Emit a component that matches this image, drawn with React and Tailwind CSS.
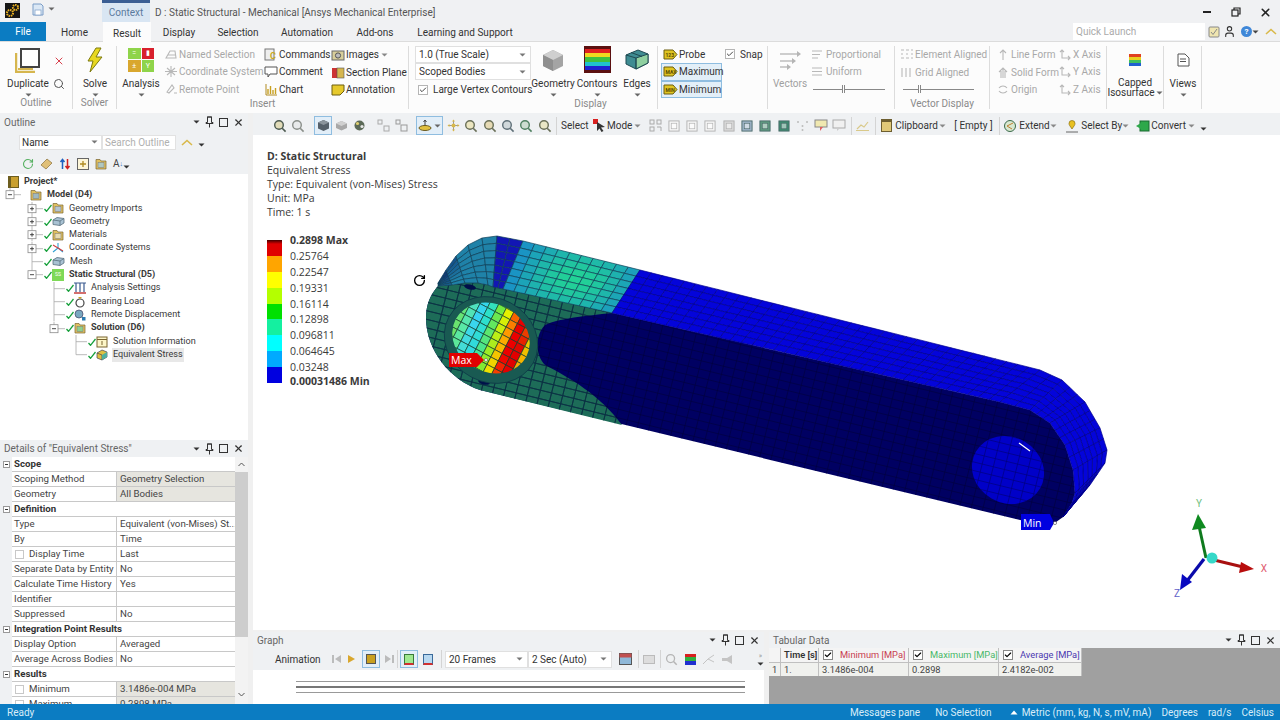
import { RotateCw, User, Check, X, Search } from 'lucide-react'

// ---- mesh for the result model ----
const outer = [[438,283],[446,270],[456,256],[468,245],[482,238],[497,236],[523,241],[640,270],[1040,370],[1062,380],[1085,402],[1100,428],[1107,450],[1105,463],[1090,485],[1063,517]]
const inner = [[438,286],[452,285],[465,283],[478,283],[488,285],[493,287],[503,289],[612,313],[1000,402],[1030,410],[1050,423],[1065,445],[1073,470],[1075,493],[1072,503],[1063,517]]

const hex = c => [1, 3, 5].map(i => parseInt(c.slice(i, i + 2), 16))
const mix = (a, b, t) => {
  const x = hex(a), y = hex(b)
  const k = Math.max(0, Math.min(1, t))
  return `rgb(${x.map((v, i) => Math.round(v + (y[i] - v) * k)).join(',')})`
}

function bandColor(x, v) {
  if (x < 497) return mix('#0b2f78', '#1f82a8', (x - 440) / 16 + v * 0.8)
  if (x < 523) return '#1216b4'
  if (x < 640) {
    const s = (x - 523) / 117
    return mix('#1a94c4', '#22d296', Math.sin(Math.PI * s) * (0.55 + 0.45 * Math.sin(Math.PI * v)))
  }
  return '#0404da'
}

const bandCells = (() => {
  const cols = []
  for (let i = 0; i < outer.length - 1; i++) {
    const len = Math.hypot(outer[i + 1][0] - outer[i][0], outer[i + 1][1] - outer[i][1])
    const n = Math.max(1, Math.round(len / 11.5))
    for (let k = 0; k < n; k++) {
      const t = k / n
      cols.push([
        [outer[i][0] + (outer[i + 1][0] - outer[i][0]) * t, outer[i][1] + (outer[i + 1][1] - outer[i][1]) * t],
        [inner[i][0] + (inner[i + 1][0] - inner[i][0]) * t, inner[i][1] + (inner[i + 1][1] - inner[i][1]) * t],
      ])
    }
  }
  cols.push([outer[outer.length - 1], inner[inner.length - 1]])
  const rows = 7
  const at = (c, r) => [c[0][0] + (c[1][0] - c[0][0]) * r / rows, c[0][1] + (c[1][1] - c[0][1]) * r / rows]
  const cells = []
  for (let i = 0; i < cols.length - 1; i++) {
    for (let r = 0; r < rows; r++) {
      const pts = [at(cols[i], r), at(cols[i + 1], r), at(cols[i + 1], r + 1), at(cols[i], r + 1)]
      cells.push({
        d: 'M' + pts.map(p => p[0].toFixed(1) + ' ' + p[1].toFixed(1)).join('L') + 'Z',
        fill: bandColor(cols[i][0][0], (r + 0.5) / rows),
        dark: cols[i][0][0] >= 640,
      })
    }
  }
  return cells
})()

const gridLines = (() => {
  const lines = []
  for (let k = -40; k < 30; k++) {
    const y0 = 300 + k * 8.6
    lines.push(`M400 ${y0 + 30}L1130 ${y0 + 30 + 730 * 0.245}`)
  }
  for (let k = 0; k < 70; k++) {
    const x0 = 380 + k * 11.8
    lines.push(`M${x0} 560L${x0 + 90} 200`)
  }
  return lines.join('')
})()

const stops = [[-46,'#78e040'],[-30,'#58e8a8'],[-20,'#38d4f4'],[-10,'#2ce0c8'],[0,'#78ea38'],[8,'#e8f000'],[14,'#ffa000'],[20,'#ee0000'],[30,'#e00000'],[36,'#ffa000'],[43,'#d8f000'],[52,'#50e040']]
function holeColor(u) {
  for (let i = 0; i < stops.length - 1; i++) {
    if (u <= stops[i + 1][0]) return mix(stops[i][1], stops[i + 1][1], (u - stops[i][0]) / (stops[i + 1][0] - stops[i][0]))
  }
  return stops[stops.length - 1][1]
}
const holeCells = (() => {
  const out = []
  const step = 8.5
  for (let a = -7; a < 7; a++) {
    for (let b = -7; b < 7; b++) {
      const p = (u, v) => [491 + u * 0.88 - v * 0.45, 338 + u * 0.47 + v * 0.88]
      const u = a * step, v = b * step
      const pts = [p(u, v), p(u + step, v), p(u + step, v + step), p(u, v + step)]
      out.push({
        d: 'M' + pts.map(q => q[0].toFixed(1) + ' ' + q[1].toFixed(1)).join('L') + 'Z',
        fill: holeColor(u + step / 2 - (v + step / 2) * 0.12),
      })
    }
  }
  return out
})()

const faceD = 'M438 286L452 285L465 283L478 283L488 285L494 287L503 289L612 313L1000 402L1030 410L1050 423L1065 445L1073 470L1075 493L1072 503L1063 517L1052 525L1020 520L480 390C450 380 426 350 426 318C426 305 430 295 438 286Z'
const tealD = 'M438 286L452 285L465 283L478 283L488 285L494 287L503 289L612 313C585 316 560 318 545 325C535 335 535 355 545 365C570 378 600 395 622 425L480 390C450 380 426 350 426 318C426 305 430 295 438 286Z'

function Model() {
  return (
    <svg viewBox="253 135 1027 495" className="absolute inset-0 w-full h-full">
      <defs>
        <clipPath id="face"><path d={faceD} /></clipPath>
        <clipPath id="teal"><path d={tealD} /></clipPath>
        <clipPath id="hole1"><ellipse cx="491" cy="338" rx="40" ry="34" transform="rotate(28 491 338)" /></clipPath>
        <clipPath id="hole2"><ellipse cx="1008" cy="470" rx="37" ry="33" transform="rotate(30 1008 470)" /></clipPath>
      </defs>
      <path d={faceD} fill="#000062" />
      <path d={tealD} fill="#1d6c58" />
      <g clipPath="url(#face)"><path d={gridLines} stroke="#00003c" strokeWidth="0.6" fill="none" /></g>
      <g clipPath="url(#teal)"><path d={gridLines} stroke="#0d3644" strokeWidth="0.8" fill="none" /></g>
      <ellipse cx="470" cy="287" rx="6" ry="2.5" fill="#00104a" transform="rotate(14 470 287)" />
      <ellipse cx="484" cy="382" rx="6" ry="2.5" fill="#00104a" transform="rotate(14 484 382)" />
      {bandCells.map((c, i) => (
        <path key={i} d={c.d} fill={c.fill} stroke={c.dark ? '#00008c' : '#0f3f58'} strokeWidth="0.7" />
      ))}
      <ellipse cx="491" cy="340" rx="48" ry="42" transform="rotate(28 491 340)" fill="#195a52" stroke="#0e3a48" strokeWidth="0.8" />
      <g clipPath="url(#hole1)">
        {holeCells.map((c, i) => <path key={i} d={c.d} fill={c.fill} stroke="#1a4030" strokeWidth="0.7" />)}
      </g>
      <ellipse cx="1008" cy="470" rx="37" ry="33" transform="rotate(30 1008 470)" fill="#0000c8" />
      <g clipPath="url(#hole2)"><path d={gridLines} stroke="#00007c" strokeWidth="0.7" fill="none" /></g>
      <path d="M1019 443L1030 451" stroke="#fff" strokeWidth="1.2" />
      {/* labels */}
      <path d="M449 353H477L484 360L477 367H449Z" fill="#e00000" />
      <circle cx="486" cy="360" r="1.5" fill="#fff" stroke="#444" strokeWidth="0.5" />
      <path d="M1021 514H1050L1054 523L1050 530H1021Z" fill="#0000e0" />
      <circle cx="1055" cy="523" r="1.6" fill="#fff" stroke="#444" strokeWidth="0.6" />
      {/* triad */}
      <path d="M1206 558L1199 526" stroke="#0f7a1e" strokeWidth="3" />
      <path d="M1198 514L1206 528L1192 530Z" fill="#0f8a20" />
      <path d="M1214 560L1243 567" stroke="#a81010" strokeWidth="3" />
      <path d="M1254 569L1239 573L1241 562Z" fill="#b80d0d" />
      <path d="M1204 559L1187 581" stroke="#0a0aaa" strokeWidth="3.2" />
      <path d="M1180 590L1182 574L1192 582Z" fill="#0808c0" />
      <circle cx="1212" cy="558" r="5.5" fill="#36d8c8" />
      <text x="1199" y="507" fontSize="10" fill="#70c080" textAnchor="middle">Y</text>
      <text x="1264" y="572" fontSize="10" fill="#e06070" textAnchor="middle">X</text>
      <text x="1177" y="597" fontSize="10" fill="#6060c8" textAnchor="middle">Z</text>
    </svg>
  )
}

// ---- small bits ----
const Caret = ({ c = '#555' }) => (
  <svg width="7" height="4" viewBox="0 0 7 4" className="shrink-0"><path d="M0.5 0.5H6.5L3.5 3.5Z" fill={c} /></svg>
)

function Pin() {
  return (
    <svg width="9" height="12" viewBox="0 0 9 12"><path d="M2.5 1V6.5H1V7.5H8V6.5H6.5V1ZM2 1H7M4.5 7.5V11.5" stroke="#333" strokeWidth="1" fill="none" /></svg>
  )
}

function PanelHeader({ title, tall }) {
  return (
    <div className={`${tall ? 'h-[17px]' : 'h-[16px]'} flex items-center bg-[#eff1f3] pl-[4px] pr-[4px] shrink-0`}>
      <span className="text-[10px] text-[#666] whitespace-nowrap">{title}</span>
      <div className="flex-1 mx-[4px] h-[5px] bg-[radial-gradient(#c9c9c9_0.6px,transparent_0.7px)] bg-[length:2px_2px]" />
      <div className="flex items-center gap-[5px] text-[#333]">
        <Caret c="#333" />
        <Pin />
        <span className="w-[9px] h-[9px] border border-[#333]" />
        <X size={11} strokeWidth={2.5} />
      </div>
    </div>
  )
}

const Mag = ({ c = '#b7a24a', ring = '#5b6b60', s = 14 }) => (
  <svg width={s} height={s} viewBox="0 0 14 14" className="shrink-0">
    <circle cx="6" cy="6" r="4.3" fill={c} fillOpacity="0.35" stroke={ring} strokeWidth="1.4" />
    <path d="M9.2 9.2L12.6 12.6" stroke={ring} strokeWidth="1.6" />
  </svg>
)

const Sq = ({ fill = 'none', line = '#a8a8a8', s = 13 }) => (
  <svg width={s} height={s} viewBox="0 0 13 13" className="shrink-0">
    <rect x="1" y="1" width="11" height="11" fill={fill} stroke={line} />
    <rect x="3.5" y="3.5" width="6" height="6" fill="#fff" fillOpacity="0.5" stroke={line} strokeWidth="0.7" />
  </svg>
)

const Tag = ({ t }) => (
  <svg width="15" height="13" viewBox="0 0 15 13" className="shrink-0">
    <path d="M1 2H10L14 6.5L10 11H1Z" fill="#dfc420" stroke="#6d5e10" />
    <text x="2.5" y="8.6" fontSize="5" fontWeight="700" fill="#5a4a00">{t}</text>
  </svg>
)

const Folder = ({ c = '#e0c060', inner = '#b0c8c0' }) => (
  <svg width="12" height="12" viewBox="0 0 12 12" className="shrink-0">
    <path d="M1 3V1.5H5L6 3H11V11H1Z" fill={c} stroke="#7a6530" strokeWidth="0.7" />
    <rect x="3" y="4.5" width="6" height="5" fill={inner} stroke="#777" strokeWidth="0.5" />
  </svg>
)

const Block = () => (
  <svg width="13" height="11" viewBox="0 0 13 11" className="shrink-0">
    <path d="M1 4L5 1.5L12 2.5V7L8 9.5L1 8.5Z" fill="#a9c2d3" stroke="#58707f" strokeWidth="0.8" />
    <path d="M1 4L8 5V9.5M8 5L12 2.5" stroke="#58707f" strokeWidth="0.8" fill="none" />
  </svg>
)

const GreenCheck = () => (
  <svg width="8" height="8" viewBox="0 0 8 8" className="shrink-0"><path d="M0.5 5L2.5 7.3L7.5 1" stroke="#17a03c" strokeWidth="1.3" fill="none" /></svg>
)

// ---- ribbon ----
function Group({ w, label, children, labelClass = '' }) {
  return (
    <div className="flex flex-col shrink-0 border-r border-[#dcdcdc] my-[4px]" style={{ width: w }}>
      <div className="flex h-[52px]">{children}</div>
      <div className={`text-[10px] text-[#8a8a8a] text-center leading-[13px] -mt-[1px] ${labelClass}`}>{label}</div>
    </div>
  )
}

function BigBtn({ w, icon, label, gray, caret = true }) {
  return (
    <div className="flex flex-col items-center shrink-0" style={{ width: w }}>
      <div className="h-[28px] flex items-center justify-center">{icon}</div>
      <div className={`text-[10px] leading-[13px] mt-[3px] whitespace-pre-line text-center ${gray ? 'text-[#a0a0a0]' : 'text-[#333]'}`}>{label}</div>
      {caret && <div className="mt-[3px]"><Caret c={gray ? '#aaa' : '#666'} /></div>}
    </div>
  )
}

function Item({ icon, label, gray, on }) {
  return (
    <div className={`h-[17.5px] flex items-center gap-[1px] whitespace-nowrap text-[10px] ${gray ? 'text-[#a8a8a8]' : 'text-[#333]'} ${on ? 'bg-[#e3eff8] border border-[#8fbde0] -mx-[2px] px-[1px]' : ''}`}>
      {icon}
      <span>{label}</span>
    </div>
  )
}

const Col = ({ w, children }) => <div className="flex flex-col shrink-0" style={{ width: w }}>{children}</div>

const GrayIco = ({ d }) => (
  <svg width="14" height="13" viewBox="0 0 14 13" className="shrink-0"><path d={d} stroke="#b8b8b8" strokeWidth="1.1" fill="none" /></svg>
)

function Check13({ on = true }) {
  return (
    <span className="w-[10px] h-[10px] border border-[#b5b5b5] bg-white flex items-center justify-center shrink-0">
      {on && <Check size={8} strokeWidth={3} className="text-[#444]" />}
    </span>
  )
}

function Sel({ w, label, h = 'h-[17px]' }) {
  return (
    <div className={`${h} bg-white border border-[#e0e0e0] flex items-center justify-between pl-[3px] pr-[4px] text-[10px] text-[#333] shrink-0 whitespace-nowrap`} style={{ width: w }}>
      <span>{label}</span>
      <Caret c="#777" />
    </div>
  )
}

function Ribbon() {
  return (
    <div className="h-[72px] flex bg-[#fcfcfc] border-t border-[#dcdcdc] shrink-0">
      <Group w={73} label="Outline">
        <div className="w-[56px]">
          <BigBtn w={56} label="Duplicate" icon={
            <svg width="26" height="26" viewBox="0 0 26 26"><path d="M1 6V25H20" stroke="#d6b64e" strokeWidth="2.5" fill="none" /><path d="M3 22H18" stroke="#d6b64e" strokeWidth="2" /><rect x="6" y="2" width="18" height="18" fill="#fff" stroke="#444" strokeWidth="2" /></svg>
          } />
        </div>
        <div className="flex flex-col items-center pt-[9px] gap-[11px] w-[10px] -ml-[2px]">
          <X size={12} strokeWidth={2} className="text-[#d8404c]" />
          <Search size={12} strokeWidth={2} className="text-[#555]" />
        </div>
      </Group>
      <Group w={44} label="Solver">
        <BigBtn w={44} label="Solve" icon={
          <svg width="16" height="26" viewBox="0 0 16 26"><path d="M9 1L1 14H6L3 25L15 10H9L14 1Z" fill="#e8d820" stroke="#7d7a10" strokeWidth="1" /></svg>
        } />
      </Group>
      <Group w={292} label="Insert">
        <div className="w-[47px] pl-[1px]">
          <BigBtn w={46} label="Analysis" icon={
            <div className="grid grid-cols-2 gap-[1px] w-[26px] h-[24px]">
              <div className="bg-[#8fd44a] flex items-center justify-center text-white text-[7px]">=</div>
              <div className="bg-[#d8202c] flex items-center justify-center text-white text-[7px]">▮</div>
              <div className="bg-[#d9a72e] flex items-center justify-center text-white text-[8px]">±</div>
              <div className="bg-[#8fd44a] flex items-center justify-center text-white text-[7px]">Y</div>
            </div>
          } />
        </div>
        <Col w={100}>
          <Item gray label="Named Selection" icon={<GrayIco d="M2 10L6 3H11L12 10ZM4 7H12" />} />
          <Item gray label="Coordinate System" icon={<GrayIco d="M7 1V12M1 6.5H13M3 3L11 10M11 3L3 10" />} />
          <Item gray label="Remote Point" icon={<GrayIco d="M3 9L8 2L10 5L5 10ZM10 10H13" />} />
        </Col>
        <Col w={67}>
          <Item label="Commands" icon={<svg width="14" height="13" viewBox="0 0 14 13" className="shrink-0"><rect x="1" y="1" width="9" height="11" fill="#eee" stroke="#777" /><text x="6" y="11" fontSize="9" fill="#c8a820" fontWeight="700">C</text></svg>} />
          <Item label="Comment" icon={<svg width="14" height="13" viewBox="0 0 14 13" className="shrink-0"><path d="M1 2H13V9H6L4 12V9H1Z" fill="#fff" stroke="#555" /></svg>} />
          <Item label="Chart" icon={<svg width="14" height="13" viewBox="0 0 14 13" className="shrink-0"><path d="M2 1V12H13" stroke="#b08a20" fill="none" /><path d="M4 11V6M6.5 11V3M9 11V7M11.5 11V5" stroke="#c8a020" strokeWidth="1.4" /></svg>} />
        </Col>
        <Col w={78}>
          <div className="flex items-center gap-[2px]">
            <Item label="Images" icon={<svg width="14" height="12" viewBox="0 0 14 12" className="shrink-0"><rect x="1" y="2" width="12" height="9" fill="#d8ce9a" stroke="#666" /><circle cx="7" cy="6.5" r="2.6" fill="#bbb" stroke="#555" /></svg>} />
            <Caret c="#888" />
          </div>
          <Item label="Section Plane" icon={<svg width="14" height="13" viewBox="0 0 14 13" className="shrink-0"><rect x="1" y="2" width="7" height="10" fill="#c33" /><rect x="6" y="2" width="7" height="10" fill="#d6b64e" stroke="#555" strokeWidth="0.6" /></svg>} />
          <Item label="Annotation" icon={<svg width="14" height="13" viewBox="0 0 14 13" className="shrink-0"><path d="M1 2H13V8L9 12H1Z" fill="#e6c92c" stroke="#6d5e10" /></svg>} />
        </Col>
      </Group>
      <Group w={249} label="Display" labelClass="pl-[115px]">
        <div className="w-[122px] pl-[6px] flex flex-col shrink-0">
          <Sel w={116} label="1.0 (True Scale)" />
          <Sel w={116} label="Scoped Bodies" />
          <div className="flex items-center gap-[5px] pl-[3px] mt-[1px] h-[17px] text-[10px] text-[#333] whitespace-nowrap"><Check13 /><span>Large Vertex Contours</span></div>
        </div>
        <BigBtn w={44} label="Geometry" icon={
          <svg width="22" height="24" viewBox="0 0 22 24"><path d="M11 2L21 7V18L11 23L1 18V7Z" fill="#a4a4a4" /><path d="M11 2L21 7L11 12L1 7Z" fill="#cfcfcf" /><path d="M11 12V23L1 18V7Z" fill="#8f8f8f" /></svg>
        } />
        <BigBtn w={44} label="Contours" icon={
          <div className="w-[27px] h-[27px] flex flex-col border-y-[3px] border-x border-[#5b1010] -mt-[1px]">
            <div className="flex-1 bg-[#e02020]" /><div className="flex-1 bg-[#f0d820]" /><div className="flex-1 bg-[#40c040]" /><div className="flex-1 bg-[#20c0d0]" /><div className="flex-1 bg-[#2020d0]" />
          </div>
        } />
        <BigBtn w={36} label="Edges" icon={
          <svg width="24" height="22" viewBox="0 0 24 22"><path d="M1 6L13 1L23 5V14L11 20L1 15Z" fill="#3f8c92" stroke="#1f4a52" /><path d="M11 9L23 5V14L11 20Z" fill="#8fd0a0" stroke="#1f4a52" /><path d="M1 6L11 9V20" stroke="#1f4a52" fill="none" /><path d="M6 3.5L17 7.5" stroke="#1f4a52" /></svg>
        } />
      </Group>
      <Group w={110} label="">
        <div className="w-[62px] pl-[5px] flex flex-col shrink-0">
          <Item label="Probe" icon={<Tag t="123" />} />
          <Item label="Maximum" on icon={<Tag t="MAX" />} />
          <Item label="Minimum" on icon={<Tag t="MIN" />} />
        </div>
        <div className="flex items-start gap-[5px] pt-[3px] pl-[5px] text-[10px] text-[#333]"><Check13 /><span className="leading-[11px]">Snap</span></div>
      </Group>
      <Group w={127} label="">
        <div className="w-[43px] shrink-0 pl-[1px]">
          <BigBtn w={42} gray caret={false} label="Vectors" icon={
            <svg width="24" height="24" viewBox="0 0 24 24"><path d="M2 6H20M2 13H15M2 19H10" stroke="#bdbdbd" strokeWidth="1.5" /><path d="M23 6L19 3V9ZM18 13L14 10V16ZM13 19L9 16V22Z" fill="#b5b5b5" /></svg>
          } />
        </div>
        <Col w={82}>
          <Item gray label="Proportional" icon={<GrayIco d="M1 3H11M1 6.5H9M1 10H7" />} />
          <Item gray label="Uniform" icon={<GrayIco d="M1 3H11M1 6.5H11M1 10H11" />} />
          <div className="h-[17.5px] flex items-center pl-[2px] pr-[8px]">
            <div className="flex-1 h-[1px] bg-[#888] relative"><span className="absolute left-[29px] -top-[4px] w-[3px] h-[8px] border-x border-[#888] bg-white" /></div>
          </div>
        </Col>
      </Group>
      <Group w={95} label="Vector Display">
        <div className="pl-[5px]">
          <Item gray label="Element Aligned" icon={<GrayIco d="M1 2H4M6 2H9M11 2H13M1 6H3M6 6H8M11 6H13M1 10H4M6 10H9M11 10H13" />} />
          <Item gray label="Grid Aligned" icon={<GrayIco d="M2 2V11M6 2V11M10 2V11" />} />
          <div className="h-[17.5px] flex items-center pl-[3px] pr-[6px] w-[80px]">
            <div className="flex-1 h-[1px] bg-[#888] relative"><span className="absolute left-[15px] -top-[4px] w-[3px] h-[8px] border-x border-[#888] bg-white" /></div>
          </div>
        </div>
      </Group>
      <Group w={117} label="">
        <Col w={68}>
          <div className="pl-[6px]">
            <Item gray label="Line Form" icon={<GrayIco d="M7 12V2M4 5L7 2L10 5" />} />
            <Item gray label="Solid Form" icon={<GrayIco d="M7 12V3M5 12V5M9 12V5M3 6L7 2L11 6" />} />
            <Item gray label="Origin" icon={<GrayIco d="M3 5A5 5 0 0 1 11 5M3 8A5 5 0 0 0 11 8" />} />
          </div>
        </Col>
        <Col w={48}>
          <Item gray label="X Axis" icon={<GrayIco d="M4 2V10H12M2 4L4 2L6 4M10 8L12 10L10 12" />} />
          <Item gray label="Y Axis" icon={<GrayIco d="M4 2V10H12M2 4L4 2L6 4M10 8L12 10L10 12" />} />
          <Item gray label="Z Axis" icon={<GrayIco d="M4 2V10H12M2 4L4 2L6 4M10 8L12 10L10 12" />} />
        </Col>
      </Group>
      <Group w={57} label="">
        <div className="w-[57px] flex flex-col items-center">
          <div className="h-[24px] flex items-center pt-[4px]">
            <div className="w-[12px] h-[12px] flex flex-col">
              <div className="flex-1 bg-[#e04020]" /><div className="flex-1 bg-[#e8d020]" /><div className="flex-1 bg-[#40c060]" /><div className="flex-1 bg-[#2060d0]" />
            </div>
          </div>
          <div className="text-[10px] leading-[10px] text-[#333] text-center mt-[8px]">Capped</div>
          <div className="flex items-center gap-[1px] text-[10px] leading-[10px] text-[#333] whitespace-nowrap">Isosurface<Caret c="#666" /></div>
        </div>
      </Group>
      <Group w={38} label="">
        <BigBtn w={38} label="Views" icon={
          <svg width="13" height="14" viewBox="0 0 13 14"><path d="M1 1H8L12 5V13H1Z" fill="#fff" stroke="#555" /><path d="M3 6H9M3 8.5H9" stroke="#555" /></svg>
        } />
      </Group>
    </div>
  )
}

// ---- outline tree ----
function TreeCol({ kind }) {
  const stroke = '#a8a8a8'
  const h = 13.33
  const box = kind === 'plus' || kind === 'minus' || kind === 'minusEnd' || kind === 'minusTop'
  return (
    <svg width="22" height={h} viewBox="0 0 22 13.33" className="shrink-0">
      {(kind === 't' || kind === 'v' || kind === 'plus' || kind === 'minus') && <path d="M11 0V13.33" stroke={stroke} strokeWidth="0.8" />}
      {(kind === 'l' || kind === 'minusEnd' || kind === 'minusTop') && <path d="M11 0V6.7" stroke={stroke} strokeWidth="0.8" />}
      {(kind === 't' || kind === 'l' || box) && <path d="M11 6.7H22" stroke={stroke} strokeWidth="0.8" />}
      {box && <rect x="7" y="2.7" width="8" height="8" fill="#fff" stroke="#8a8a8a" strokeWidth="0.8" />}
      {box && <path d="M9 6.7H13" stroke="#333" strokeWidth="0.9" />}
      {kind === 'plus' && <path d="M11 4.7V8.7" stroke="#333" strokeWidth="0.9" />}
    </svg>
  )
}

const tree = [
  { cols: ['minusTop'], icon: <Folder inner="#9fb8c0" />, label: 'Model (D4)', bold: true, noCheck: true },
  { cols: ['', 'plus'], icon: <Folder inner="#b4c4d0" />, label: 'Geometry Imports' },
  { cols: ['', 'plus'], icon: <Block />, label: 'Geometry' },
  { cols: ['', 'plus'], icon: <Folder inner="#e8dcb0" />, label: 'Materials' },
  { cols: ['', 'plus'], icon: <svg width="12" height="12" viewBox="0 0 12 12" className="shrink-0"><path d="M6 1V6L11 10M6 6L1 10" stroke="#30a0d0" strokeWidth="1.1" fill="none" /><path d="M1 3L11 9" stroke="#d04040" strokeWidth="1.1" /></svg>, label: 'Coordinate Systems' },
  { cols: ['', 't'], icon: <Block />, label: 'Mesh' },
  { cols: ['', 'minusEnd'], icon: <span className="w-[12px] h-[12px] bg-[#7ed957] text-white text-[5px] flex items-center justify-center shrink-0">SS</span>, label: 'Static Structural (D5)', bold: true },
  { cols: ['', '', 't'], icon: <svg width="12" height="12" viewBox="0 0 12 12" className="shrink-0"><path d="M2 1V10M6 1V10M10 1V10" stroke="#3a5a90" strokeWidth="1.2" /><path d="M0 1H12" stroke="#3a5a90" /><path d="M0 11H12" stroke="#c03030" strokeWidth="1.4" /></svg>, label: 'Analysis Settings' },
  { cols: ['', '', 't'], icon: <svg width="12" height="12" viewBox="0 0 12 12" className="shrink-0"><circle cx="6" cy="7" r="4" fill="#fff" stroke="#444" strokeWidth="1.2" /><path d="M4 1H8L6 3Z" fill="#c8a020" /></svg>, label: 'Bearing Load' },
  { cols: ['', '', 't'], icon: <svg width="12" height="12" viewBox="0 0 12 12" className="shrink-0"><circle cx="5" cy="5" r="4" fill="#7aa8c0" stroke="#446" strokeWidth="0.7" /><rect x="8" y="8" width="3.5" height="3.5" fill="#2a7ab0" /></svg>, label: 'Remote Displacement' },
  { cols: ['', '', 'minusEnd'], icon: <Folder inner="#8fd08f" />, label: 'Solution (D6)', bold: true },
  { cols: ['', '', '', 't'], icon: <svg width="12" height="12" viewBox="0 0 12 12" className="shrink-0"><rect x="1" y="1" width="10" height="10" fill="#fdf6c8" stroke="#7a6530" /><path d="M1 3.5H11M6 5V9" stroke="#7a6530" /></svg>, label: 'Solution Information' },
  { cols: ['', '', '', 'l'], icon: <svg width="12" height="12" viewBox="0 0 12 12" className="shrink-0"><path d="M1 4L6 1L11 3V8L6 11L1 9Z" fill="#e0c040" stroke="#445" strokeWidth="0.7" /><path d="M1 4L6 6V11" stroke="#445" strokeWidth="0.7" fill="none" /><path d="M6 6L11 3V8L6 11Z" fill="#50b0a0" /></svg>, label: 'Equivalent Stress', sel: true },
]

function Outline() {
  return (
    <div className="h-[327px] flex flex-col shrink-0 bg-white">
      <div className="h-[1px] bg-[#f0f1f3] shrink-0" />
      <PanelHeader title="Outline" />
      <div className="h-[24px] flex items-center bg-[#eff1f3] pl-[19px] shrink-0">
        <div className="w-[83px] h-[15px] bg-white border border-[#e2e2e2] flex items-center justify-between pl-[2px] pr-[3px] text-[10px] text-[#333]">Name<Caret c="#777" /></div>
        <div className="w-[74px] h-[15px] bg-white border border-[#e2e2e2] flex items-center pl-[2px] text-[10px] text-[#b0b0b0] whitespace-nowrap overflow-hidden">Search Outline</div>
        <svg width="12" height="7" viewBox="0 0 12 7" className="ml-[5px]"><path d="M1 6L6 1.5L11 6" stroke="#d9b94a" strokeWidth="1.6" fill="none" /></svg>
        <span className="ml-[5px] mt-[5px]"><Caret c="#333" /></span>
      </div>
      <div className="h-[20px] flex items-center gap-[6px] bg-[#eff1f3] pl-[22px] shrink-0">
        <RotateCw size={12} strokeWidth={2.2} className="text-[#55b060]" />
        <svg width="13" height="12" viewBox="0 0 13 12"><path d="M1 7L7 1L12 5L6 11Z" fill="#e0c078" stroke="#8a7038" strokeWidth="0.7" /></svg>
        <svg width="12" height="12" viewBox="0 0 12 12"><path d="M3.5 11V2M1.5 4L3.5 1.5L5.5 4" stroke="#2060c0" strokeWidth="1.5" fill="none" /><path d="M8.5 1V10M6.5 8L8.5 10.5L10.5 8" stroke="#d02020" strokeWidth="1.5" fill="none" /></svg>
        <svg width="12" height="12" viewBox="0 0 12 12"><rect x="0.5" y="0.5" width="11" height="11" fill="#fdf6d8" stroke="#666" /><path d="M3 6H9M6 3V9" stroke="#b08a20" strokeWidth="1.3" /></svg>
        <Folder />
        <span className="text-[10px] text-[#444] leading-none flex items-center">A<span className="text-[7px] text-[#2a6ac0]">↓</span></span>
        <span className="-ml-[6px] mt-[6px]"><Caret c="#333" /></span>
      </div>
      <div className="pt-[1px] text-[9.1px] text-[#3a3a3a]">
        <div className="h-[13.33px] flex items-center whitespace-nowrap pl-[8px] font-bold">
          <span className="w-[11px] h-[12px] bg-[#c9a030] border border-[#6d5e20] border-l-[3px] mr-[5px] shrink-0" />
          Project*
        </div>
        {tree.map(r => (
          <div key={r.label} className="h-[13.33px] flex items-center whitespace-nowrap -ml-[1px]">
            {r.cols.map((k, i) => <TreeCol key={i} kind={k} />)}
            <span className="w-[9px] flex justify-end shrink-0">{!r.noCheck && <GreenCheck />}</span>
            {r.icon}
            <span className={`ml-[4px] px-[1px] ${r.bold ? 'font-bold' : ''} ${r.sel ? 'bg-[#e8e8e8]' : ''}`}>{r.label}</span>
          </div>
        ))}
      </div>
    </div>
  )
}

// ---- details ----
const details = [
  { section: 'Scope' },
  { k: 'Scoping Method', v: 'Geometry Selection', shade: true },
  { k: 'Geometry', v: 'All Bodies', shade: true },
  { section: 'Definition' },
  { k: 'Type', v: 'Equivalent (von-Mises) St...' },
  { k: 'By', v: 'Time' },
  { k: 'Display Time', v: 'Last', check: true },
  { k: 'Separate Data by Entity', v: 'No' },
  { k: 'Calculate Time History', v: 'Yes' },
  { k: 'Identifier', v: '' },
  { k: 'Suppressed', v: 'No' },
  { section: 'Integration Point Results' },
  { k: 'Display Option', v: 'Averaged' },
  { k: 'Average Across Bodies', v: 'No' },
  { section: 'Results' },
  { k: 'Minimum', v: '3.1486e-004 MPa', shade: true, check: true },
  { k: 'Maximum', v: '0.2898 MPa', shade: true, check: true },
]

function Details() {
  return (
    <div className="flex-1 flex flex-col min-h-0 bg-white">
      <PanelHeader title={'Details of "Equivalent Stress"'} tall />
      <div className="flex-1 flex min-h-0 overflow-hidden">
        <div className="w-[235px] shrink-0 bg-[#eff1f3]">
          {details.map(r => r.section ? (
            <div key={r.section} className="h-[15px] flex">
              <div className="w-[12px] shrink-0 flex items-center justify-center">
                <span className="w-[7px] h-[7px] border border-[#999] bg-white flex items-center justify-center"><span className="w-[3px] h-[1px] bg-[#333]" /></span>
              </div>
              <div className="flex-1 bg-white border-b border-[#c8c8c8] pl-[2px] text-[9.7px] font-bold text-[#333] leading-[14px] whitespace-nowrap">{r.section}</div>
            </div>
          ) : (
            <div key={r.k} className="h-[15px] flex">
              <div className="w-[12px] shrink-0" />
              <div className="w-[105px] shrink-0 bg-white border-b border-r border-[#c8c8c8] pl-[2px] text-[9.7px] text-[#444] flex items-center whitespace-nowrap">
                {r.check && <span className="w-[9px] h-[9px] border border-[#c8c8c8] mr-[5px] ml-[1px] shrink-0" />}
                {r.k}
              </div>
              <div className={`flex-1 border-b border-[#c8c8c8] pl-[3px] text-[9.7px] text-[#444] flex items-center whitespace-nowrap ${r.shade ? 'bg-[#e6e5df]' : 'bg-white'}`}>{r.v}</div>
            </div>
          ))}
        </div>
        <div className="w-[13px] shrink-0 bg-[#f3f3f3] flex flex-col items-center">
          <div className="h-[15px] text-[#666] flex items-center justify-center">
            <svg width="7" height="5" viewBox="0 0 7 5"><path d="M0.5 4L3.5 1L6.5 4" stroke="#555" fill="none" /></svg>
          </div>
          <div className="w-full h-[165px] bg-[#cdcdcd]" />
          <div className="mt-[50px] h-[15px] flex items-center">
            <svg width="7" height="5" viewBox="0 0 7 5"><path d="M0.5 1L3.5 4L6.5 1" stroke="#555" fill="none" /></svg>
          </div>
        </div>
      </div>
    </div>
  )
}

// ---- top toolbar of the viewport ----
const Slot = ({ w, on, children, ml = 0 }) => (
  <div className={`h-[19px] flex items-center justify-center shrink-0 ${on ? 'bg-[#e2eef8] border border-[#8fbde0]' : ''}`} style={{ width: w, marginLeft: ml }}>{children}</div>
)
const Txt = ({ ml = 0, w, children }) => <span className="text-[10px] text-[#333] whitespace-nowrap shrink-0" style={{ marginLeft: ml, width: w }}>{children}</span>
const Sep = ({ ml = 0, mr = 0 }) => <span className="w-[1px] h-[18px] bg-[#d4d4d4] shrink-0" style={{ marginLeft: ml, marginRight: mr }} />

function ViewToolbar() {
  return (
    <div className="h-[22px] flex items-center bg-[#eff1f3] shrink-0 pt-[3px]">
      <Slot w={18}><span className="w-[3px] h-[14px] bg-[radial-gradient(#c4c4c4_0.6px,transparent_0.7px)] bg-[length:2px_2px]" /></Slot>
      <Slot w={18}><Mag ring="#4c5a50" c="#c9b34a" /></Slot>
      <Slot w={18}><Mag ring="#8a8f8a" c="#dddddd" /></Slot>
      <Slot w={18} ml={7} on><svg width="13" height="13" viewBox="0 0 13 13"><path d="M6.5 1L12 3.5V9.5L6.5 12L1 9.5V3.5Z" fill="#55606a" /><path d="M6.5 1L12 3.5L6.5 6L1 3.5Z" fill="#8a949c" /></svg></Slot>
      <Slot w={18}><svg width="13" height="13" viewBox="0 0 13 13"><path d="M6.5 2L12 4.5V9L6.5 11.5L1 9V4.5Z" fill="#a8a8a8" /><path d="M6.5 2L12 4.5L6.5 7L1 4.5Z" fill="#d0d0d0" /></svg></Slot>
      <Slot w={18}><svg width="13" height="13" viewBox="0 0 13 13"><circle cx="6.5" cy="6.5" r="5" fill="#5c6a58" /><circle cx="4.5" cy="4.5" r="1.6" fill="#e0d070" /><circle cx="9" cy="7.5" r="1.6" fill="#e8e8e8" /></svg></Slot>
      <Slot w={18} ml={6}><svg width="13" height="13" viewBox="0 0 13 13" fill="none" stroke="#aaa"><rect x="1" y="1" width="4" height="4" /><rect x="7" y="7" width="5" height="5" /></svg></Slot>
      <Slot w={18}><svg width="13" height="13" viewBox="0 0 13 13" fill="none" stroke="#999"><rect x="1" y="1" width="4" height="4" /><rect x="6" y="6" width="6" height="6" /></svg></Slot>
      <div className="ml-[6px] w-[27px] h-[19px] bg-[#e2eef8] border border-[#8fbde0] flex items-center justify-center gap-[2px] shrink-0">
        <svg width="14" height="14" viewBox="0 0 14 14"><path d="M7 1V10" stroke="#444" /><ellipse cx="7" cy="9" rx="6" ry="2.5" fill="#e0c040" stroke="#6a5a20" /><path d="M5.5 3L7 1L8.5 3" stroke="#444" fill="none" /></svg>
        <Caret c="#666" />
      </div>
      <Slot w={18} ml={1}><svg width="13" height="13" viewBox="0 0 13 13"><path d="M6.5 1V12M1 6.5H12" stroke="#999" /><circle cx="6.5" cy="6.5" r="2" fill="#d9b94a" /><path d="M6.5 0.5L5 2.5H8ZM6.5 12.5L5 10.5H8ZM0.5 6.5L2.5 5V8ZM12.5 6.5L10.5 5V8Z" fill="#d9b94a" /></svg></Slot>
      {[0, 1, 2, 3, 4].map(i => (
        <Slot key={i} w={18.4}><Mag ring={i === 2 ? '#5f7078' : i === 3 ? '#4f8060' : '#6a7058'} c={i === 0 ? '#e8d060' : i === 1 ? '#d8b040' : i === 2 ? '#99aab0' : i === 3 ? '#90b890' : '#e0d070'} /></Slot>
      ))}
      <Sep ml={2} mr={4} />
      <Txt w={27}>Select</Txt>
      <span className="ml-[5px] shrink-0"><svg width="14" height="13" viewBox="0 0 14 13"><rect x="0" y="0" width="5" height="5" fill="#d82020" /><path d="M4 3L12 8L8 8.5L10.5 12L8.5 13L6.5 9.5L4 12Z" fill="#333" /></svg></span>
      <Txt ml={0} w={27}>Mode</Txt>
      <span className="mr-[5px]"><Caret c="#888" /></span>
      <Slot w={18.4}><svg width="13" height="13" viewBox="0 0 13 13" fill="none" stroke="#aaa"><rect x="1" y="1" width="4" height="4" /><rect x="8" y="1" width="4" height="4" /><rect x="1" y="8" width="4" height="4" /><path d="M8 8H12V12" /></svg></Slot>
      {['#f6f6f6', '#f6f6f6', '#f6f6f6', '#d8d8d8', '#9fb4c8', '#5f9a80', '#3f8a70'].map((c, i) => (
        <Slot key={i} w={18.4}><Sq fill={c} line={i > 3 ? '#4a6a6a' : '#b0b0b0'} s={12} /></Slot>
      ))}
      <Slot w={18.4}><svg width="13" height="13" viewBox="0 0 13 13"><circle cx="2" cy="3" r="1" fill="#bbb" /><circle cx="11" cy="3" r="1" fill="#bbb" /><circle cx="6.5" cy="7" r="1" fill="#bbb" /><circle cx="6.5" cy="11" r="1" fill="#bbb" /></svg></Slot>
      <Slot w={18.4}><svg width="14" height="13" viewBox="0 0 14 13"><rect x="1" y="1" width="12" height="7" fill="#f0e8b0" stroke="#888" /><path d="M6 8V12L9 8" fill="#e06060" /></svg></Slot>
      <Slot w={18.4}><svg width="14" height="13" viewBox="0 0 14 13"><rect x="1" y="1" width="12" height="8" fill="#f0f0f0" stroke="#aaa" /><path d="M5 9V12L8 9" fill="#ccc" /></svg></Slot>
      <Sep ml={3} mr={3} />
      <svg width="13" height="11" viewBox="0 0 13 11" className="shrink-0 ml-[1px]"><path d="M1 9L5 5L8 7L12 2M0 10.5H13" stroke="#d9c98a" strokeWidth="1.2" fill="none" /></svg>
      <Sep ml={6} mr={0} />
      <span className="ml-[5px] w-[11px] h-[13px] bg-[#e0c878] border border-[#6d5e30] border-t-[3px] shrink-0" />
      <Txt ml={3} w={43}>Clipboard</Txt>
      <span className="ml-[1px]"><Caret c="#888" /></span>
      <Txt ml={8} w={40}>[ Empty ]</Txt>
      <Sep ml={5} mr={0} />
      <svg width="14" height="14" viewBox="0 0 14 14" className="shrink-0 ml-[3px]"><circle cx="7" cy="7" r="5.5" fill="#d8e8d0" stroke="#3a6a4a" /><path d="M4 7L10 4M4 7L9 10" stroke="#c08030" /></svg>
      <Txt ml={2} w={30}>Extend</Txt>
      <span className="ml-[1px]"><Caret c="#888" /></span>
      <span className="ml-[8px] shrink-0 flex flex-col items-center">
        <svg width="14" height="14" viewBox="0 0 14 14"><path d="M7 10C5 7 4 6 4 4.5A3 3 0 0 1 10 4.5C10 6 9 7 7 10Z" fill="#e8c020" stroke="#8a7010" strokeWidth="0.7" /><path d="M1 13H13" stroke="#666" /></svg>
      </span>
      <Txt ml={2} w={40}>Select By</Txt>
      <span className="ml-[1px]"><Caret c="#888" /></span>
      <svg width="14" height="12" viewBox="0 0 14 12" className="shrink-0 ml-[7px]"><rect x="4" y="1" width="9" height="10" fill="#2ea84a" stroke="#1a6a30" /><path d="M0 6L5 3V9Z" fill="#2ea84a" /></svg>
      <Txt ml={1} w={36}>Convert</Txt>
      <span className="ml-[1px]"><Caret c="#888" /></span>
      <span className="ml-[5px] mt-[6px]"><Caret c="#333" /></span>
    </div>
  )
}

// ---- viewport annotation ----
const legend = [
  ['bg-[linear-gradient(#400000_0%,#e00000_25%)]', '0.2898 Max', true],
  ['bg-[#ffa500]', '0.25764'],
  ['bg-[#ffff00]', '0.22547'],
  ['bg-[#b4ff00]', '0.19331'],
  ['bg-[#00e000]', '0.16114'],
  ['bg-[#14f0a0]', '0.12898'],
  ['bg-[#00ffff]', '0.096811'],
  ['bg-[#00aaff]', '0.064645'],
  ['bg-[#0000e0]', '0.03248'],
]

function Annotation() {
  return (
    <div className="relative pl-[14px] pt-[14px] text-[10.5px] text-[#3a3a3a] w-fit font-['Open_Sans',sans-serif]">
      <div className="font-bold leading-[14px]">D: Static Structural</div>
      <div className="leading-[14px]">Equivalent Stress</div>
      <div className="leading-[14px] whitespace-nowrap">Type: Equivalent (von-Mises) Stress</div>
      <div className="leading-[14px]">Unit: MPa</div>
      <div className="leading-[14px]">Time: 1 s</div>
      <div className="mt-[21px]">
        {legend.map(([c, label, bold]) => (
          <div key={label} className="h-[15.9px] flex">
            <div className={`w-[15px] shrink-0 ${c}`} />
            <span className={`ml-[8px] leading-[14px] -mt-[7px] ${bold ? 'font-bold' : ''}`}>{label}</span>
          </div>
        ))}
        <div className="h-[14px] flex">
          <div className="w-[15px] shrink-0" />
          <span className="ml-[8px] font-bold leading-[14px] -mt-[9px] whitespace-nowrap">0.00031486 Min</span>
        </div>
      </div>
    </div>
  )
}

// ---- bottom panes ----
function GraphPane() {
  return (
    <div className="flex-1 flex flex-col bg-white min-w-0">
      <PanelHeader title="Graph" />
      <div className="h-[22px] flex items-center bg-[#eff1f3] shrink-0 pl-[9px]">
        <span className="w-[3px] h-[14px] bg-[radial-gradient(#c4c4c4_0.6px,transparent_0.7px)] bg-[length:2px_2px]" />
        <Txt ml={10} w={47}>Animation</Txt>
        <svg width="10" height="10" viewBox="0 0 10 10" className="ml-[10px] shrink-0"><path d="M1 1V9" stroke="#aaa" strokeWidth="1.5" /><path d="M9 1V9L3 5Z" fill="#bbb" /></svg>
        <svg width="9" height="10" viewBox="0 0 9 10" className="ml-[5px] shrink-0"><path d="M1 1V9L8 5Z" fill="#d9a72e" /></svg>
        <div className="ml-[6px] w-[18px] h-[18px] bg-[#e2eef8] border border-[#8fbde0] flex items-center justify-center shrink-0"><span className="w-[10px] h-[10px] bg-[#c9a020] border border-[#555]" /></div>
        <svg width="10" height="10" viewBox="0 0 10 10" className="ml-[4px] shrink-0"><path d="M1 1V9L7 5Z" fill="#bbb" /><path d="M9 1V9" stroke="#aaa" strokeWidth="1.5" /></svg>
        <Sep ml={3} mr={2} />
        <div className="w-[18px] h-[18px] bg-[#e2eef8] border border-[#8fbde0] flex items-center justify-center shrink-0"><span className="w-[10px] h-[11px] bg-[#a0e890] border border-[#3a7a3a] border-b-[#d03030] border-b-2" /></div>
        <div className="w-[19px] flex items-center justify-center shrink-0"><span className="w-[10px] h-[11px] bg-[#b8d8f0] border border-[#3a6a9a] border-b-[#d03030] border-b-2" /></div>
        <Sep ml={4} mr={3} />
        <Sel w={83} label="20 Frames" />
        <Sel w={84} label="2 Sec (Auto)" />
        <Slot w={20} ml={3}><svg width="13" height="12" viewBox="0 0 13 12"><rect x="0.5" y="0.5" width="12" height="11" fill="#8fb8d8" stroke="#555" /><rect x="0.5" y="0.5" width="12" height="4" fill="#c05050" /></svg></Slot>
        <Sep ml={3} mr={0} />
        <Slot w={20}><span className="w-[12px] h-[9px] bg-[#ddd] border border-[#bbb]" /></Slot>
        <Sep ml={1} mr={0} />
        <Slot w={20}><Mag ring="#b5b5b5" c="#f0f0f0" s={13} /></Slot>
        <Slot w={18}><div className="w-[11px] h-[11px] flex flex-col"><div className="flex-1 bg-[#d82020]" /><div className="flex-1 bg-[#30b040]" /><div className="flex-1 bg-[#2030d0]" /></div></Slot>
        <Slot w={19}><svg width="13" height="11" viewBox="0 0 13 11" fill="none" stroke="#c4c4c4"><path d="M1 10L6 5L12 1M6 5L12 8" /></svg></Slot>
        <Slot w={19}><svg width="13" height="11" viewBox="0 0 13 11"><path d="M1 4H6L11 1V10L6 7H1Z" fill="#c4c4c4" /></svg></Slot>
        <div className="ml-[20px] flex flex-col items-center gap-[3px]">
          <span className="text-[7px] leading-[6px] text-[#999]">»</span>
          <Caret c="#333" />
        </div>
      </div>
      <div className="flex-1 bg-white pt-[11px] pl-[43px]">
        <div className="w-[449px] h-[12px] border-y border-[#999] bg-[linear-gradient(#fff_0_40%,#777_40%_60%,#fff_60%)]" />
      </div>
    </div>
  )
}

function TabularPane() {
  const th = 'border-r border-b border-[#c0c0c0] flex items-center text-[9.3px] whitespace-nowrap bg-[#f4f4f4]'
  const td = 'border-r border-[#c0c0c0] flex items-center text-[9.3px] text-[#444] bg-[#f0f1ee] pl-[3px]'
  const CheckBox = () => (
    <span className="w-[10px] h-[10px] border border-[#888] bg-white flex items-center justify-center mx-[4px] shrink-0"><Check size={8} strokeWidth={3.5} className="text-black" /></span>
  )
  return (
    <div className="flex-1 flex flex-col min-w-0 bg-[#a0a0a0]">
      <PanelHeader title="Tabular Data" />
      <div className="flex h-[15px] shrink-0">
        <div className={`w-[12px] ${th}`} />
        <div className={`w-[38px] ${th} pl-[3px] font-semibold text-[#333]`}>Time [s]</div>
        <div className={`w-[90px] ${th} text-[#c84050]`}><CheckBox /><span className="ml-[3px]">Minimum [MPa]</span></div>
        <div className={`w-[90px] ${th} text-[#48b868]`}><CheckBox /><span className="ml-[3px]">Maximum [MPa]</span></div>
        <div className={`w-[83px] ${th} text-[#4a38b0]`}><CheckBox /><span className="ml-[3px]">Average [MPa]</span></div>
      </div>
      <div className="flex h-[13px] shrink-0">
        <div className={`w-[12px] ${td}`}>1</div>
        <div className={`w-[38px] ${td}`}>1.</div>
        <div className={`w-[90px] ${td}`}>3.1486e-004</div>
        <div className={`w-[90px] ${td}`}>0.2898</div>
        <div className={`w-[83px] ${td}`}>2.4182e-002</div>
      </div>
    </div>
  )
}

function TitleBar() {
  return (
    <div className="h-[22px] flex items-start bg-[#f0f1f3] shrink-0">
      <svg width="15" height="15" viewBox="0 0 15 15" className="ml-[5px] mt-[3px] shrink-0">
        <rect width="15" height="15" fill="#161616" />
        <circle cx="5" cy="10" r="3" fill="none" stroke="#e8b020" strokeWidth="2" strokeDasharray="1.5 0.8" />
        <circle cx="10.5" cy="4.5" r="2.6" fill="none" stroke="#e8b020" strokeWidth="2" strokeDasharray="1.5 0.8" />
      </svg>
      <svg width="12" height="13" viewBox="0 0 12 13" className="ml-[12px] mt-[3px] shrink-0"><path d="M1 1H9L11 3V12H1Z" fill="#dbe8f5" stroke="#7a9cc6" /><rect x="3" y="7" width="6" height="5" fill="#fff" stroke="#7a9cc6" strokeWidth="0.7" /></svg>
      <span className="ml-[4px] mt-[7px]"><Caret c="#666" /></span>
      <div className="ml-[47px] w-[48px] h-[22px] bg-[#d9e6f3] border-t-[3px] border-[#3a5e94] flex items-center justify-center text-[10px] text-[#5a7a9e] shrink-0">Context</div>
      <span className="ml-[5px] mt-[6px] text-[10px] leading-[13px] text-[#555] whitespace-nowrap">D : Static Structural - Mechanical [Ansys Mechanical Enterprise]</span>
      <div className="ml-auto flex items-center h-[22px] pt-[2px] text-[#222]">
        <span className="w-[8px] h-[2px] bg-[#222] mr-[20px]" />
        <svg width="10" height="10" viewBox="0 0 10 10" className="mr-[18px]"><rect x="1" y="3" width="6" height="6" fill="none" stroke="#222" strokeWidth="1.2" /><path d="M3 3V1H9V7H7" fill="none" stroke="#222" strokeWidth="1.2" /></svg>
        <X size={13} strokeWidth={3} className="mr-[8px]" />
      </div>
    </div>
  )
}

const tabs = [['Home', 57], ['Result', 48], ['Display', 56], ['Selection', 62], ['Automation', 76], ['Add-ons', 60], ['Learning and Support', 120]]

function TabRow() {
  return (
    <div className="h-[19px] flex items-stretch bg-[#f0f1f3] shrink-0 text-[10px]">
      <div className="w-[46px] bg-[#0b7cc2] text-white flex items-center justify-center">File</div>
      {tabs.map(([t, w]) => (
        <div key={t} className={`text-[#333] flex items-center justify-center whitespace-nowrap shrink-0 pt-[2px] ${t === 'Result' ? 'bg-[#fcfcfc] -mb-[1px] z-10' : ''}`} style={{ width: w }}>{t}</div>
      ))}
      <div className="ml-auto flex items-center">
        <div className="w-[132px] h-[17px] bg-white text-[#aaa] pl-[3px] flex items-center">Quick Launch</div>
        <svg width="12" height="12" viewBox="0 0 12 12" className="ml-[3px]"><rect x="1" y="1" width="10" height="10" rx="1" fill="#efe5b0" stroke="#888" /><path d="M3 6L5 8.5L9 3" stroke="#888" fill="none" /></svg>
        <User size={13} strokeWidth={2} className="ml-[3px] text-[#333]" />
        <span className="ml-[5px] w-[11px] h-[11px] rounded-full bg-[#3f87d8] text-white text-[8px] font-bold flex items-center justify-center">?</span>
        <Caret c="#444" />
        <svg width="12" height="7" viewBox="0 0 12 7" className="ml-[6px] mr-[3px]"><path d="M1 6L6 1.5L11 6" stroke="#d9b94a" strokeWidth="1.6" fill="none" /></svg>
      </div>
    </div>
  )
}

export default function App() {
  return (
    <div className="w-[1280px] h-[720px] overflow-hidden flex flex-col bg-white font-['Roboto',sans-serif]">
      <TitleBar />
      <TabRow />
      <Ribbon />
      <div className="flex-1 flex min-h-0 bg-[#f0f0f0]">
        <div className="w-[248px] flex flex-col shrink-0">
          <Outline />
          <Details />
        </div>
        <div className="w-[5px] shrink-0" />
        <div className="flex-1 flex flex-col min-w-0">
          <ViewToolbar />
          <div className="flex-1 relative bg-white overflow-hidden">
            <Model />
            <Annotation />
            <RotateCw size={13} strokeWidth={2.5} className="absolute left-[160px] top-[139px] text-black" />
            <span className="absolute left-[198px] top-[218px] text-[10.5px] leading-[14px] text-white font-['Open_Sans',sans-serif]">Max</span>
            <span className="absolute left-[770px] top-[381px] text-[10.5px] leading-[14px] text-white font-['Open_Sans',sans-serif]">Min</span>
          </div>
          <div className="h-[74px] flex gap-[5px] pt-[2px] shrink-0">
            <GraphPane />
            <TabularPane />
          </div>
        </div>
      </div>
      <div className="h-[16px] flex items-center bg-[#0b7cc2] text-[10px] text-[#d8ecf8] pl-[7px] pr-[6px] whitespace-nowrap shrink-0">
        <span>Ready</span>
        <span className="ml-auto">Messages pane</span>
        <span className="ml-[15px]">No Selection</span>
        <svg width="8" height="5" viewBox="0 0 8 5" className="ml-[18px] mr-[4px]"><path d="M0.5 4.5H7.5L4 0.5Z" fill="#fff" /></svg>
        <span>Metric (mm, kg, N, s, mV, mA)</span>
        <span className="ml-[10px]">Degrees</span>
        <span className="ml-[10px]">rad/s</span>
        <span className="ml-[10px]">Celsius</span>
      </div>
    </div>
  )
}
